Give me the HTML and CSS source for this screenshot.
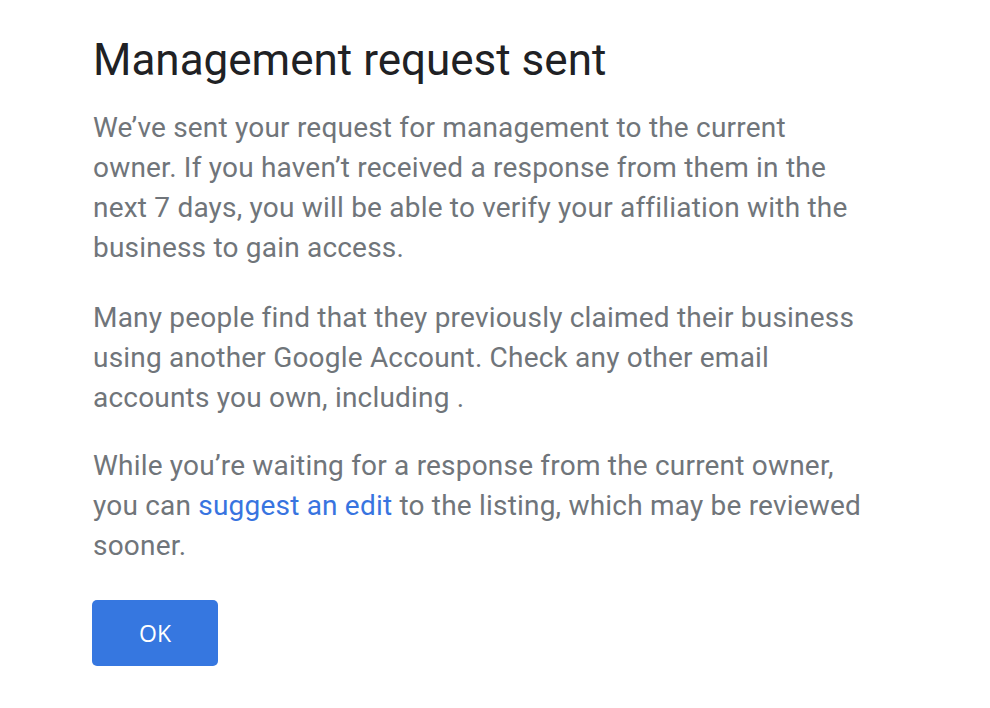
FILE: index.html
```html
<!DOCTYPE html>
<html lang="en">
<head>
<meta charset="utf-8">
<title>Management request sent</title>
<link rel="stylesheet" href="styles.css">
</head>
<body>
<main class="dialog">
  <h1 class="title">Management request sent</h1>
  <p class="para">We’ve sent your request for management to the current owner. If you haven’t received a response from them in the next 7 days, you will be able to verify your affiliation with the business to gain access.</p>
  <p class="para">Many people find that they previously claimed their business using another Google Account. Check any other email accounts you own, including .</p>
  <p class="para">While you’re waiting for a response from the current owner, you can <a class="link" href="#">suggest an edit</a> to the listing, which may be reviewed sooner.</p>
  <div class="actions">
    <button class="ok" type="button">OK</button>
  </div>
</main>
</body>
</html>
```
FILE: styles.css
```css
html, body {
  margin: 0;
  padding: 0;
  background: #ffffff;
}
.dialog {
  padding: 34px 0 0 93px;
  width: 778px;
  font-family: Roboto, "Liberation Sans", sans-serif;
}
.title {
  margin: 0 0 22px 0;
  font-family: Roboto, "Open Sans", sans-serif;
  font-weight: 400;
  font-size: 44px;
  line-height: 52px;
  color: #202124;
}
.para {
  margin: 0 0 30px 0;
  font-size: 28px;
  line-height: 40px;
  letter-spacing: 0.2px;
  color: #70757a;
}
.para:nth-of-type(2) {
  margin-bottom: 28px;
}
.link {
  color: #3874e0;
  text-decoration: none;
}
.actions {
  margin-top: 34px;
  display: flex;
}
.ok {
  margin-left: -1px;
  width: 126px;
  height: 66px;
  border: none;
  border-radius: 5px;
  background: #3677e0;
  color: #ffffff;
  font-family: "Open Sans", Roboto, sans-serif;
  font-size: 23px;
  font-weight: 500;
  cursor: pointer;
}
```
